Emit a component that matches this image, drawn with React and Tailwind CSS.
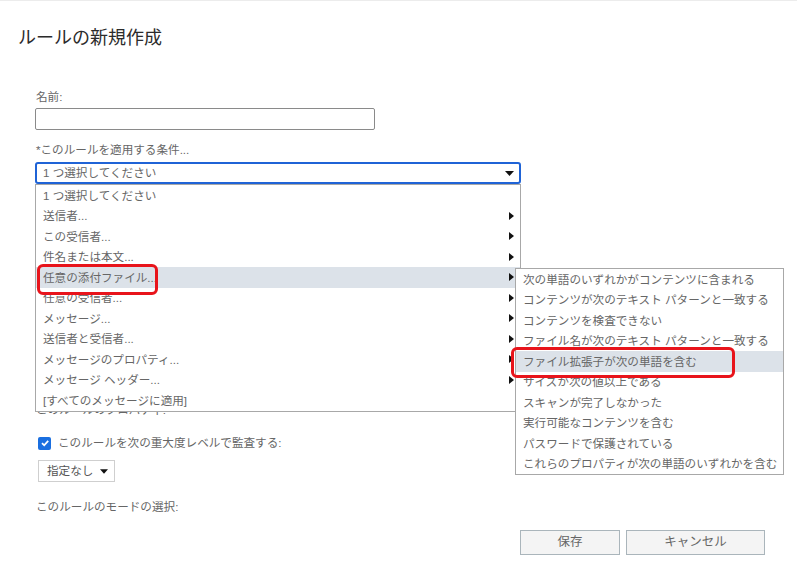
import React from "react";

const mainItems = [
  { t: "1 つ選択してください", a: false },
  { t: "送信者...", a: true },
  { t: "この受信者...", a: true },
  { t: "件名または本文...", a: true },
  { t: "任意の添付ファイル...", a: true, hl: true },
  { t: "任意の受信者...", a: true },
  { t: "メッセージ...", a: true },
  { t: "送信者と受信者...", a: true },
  { t: "メッセージのプロパティ...", a: true },
  { t: "メッセージ ヘッダー...", a: true },
  { t: "[すべてのメッセージに適用]", a: false },
];

const subItems = [
  "次の単語のいずれかがコンテンツに含まれる",
  "コンテンツが次のテキスト パターンと一致する",
  "コンテンツを検査できない",
  "ファイル名が次のテキスト パターンと一致する",
  "ファイル拡張子が次の単語を含む",
  "サイズが次の値以上である",
  "スキャンが完了しなかった",
  "実行可能なコンテンツを含む",
  "パスワードで保護されている",
  "これらのプロパティが次の単語のいずれかを含む",
];

function RightTri() {
  return (
    <svg width="5" height="8" viewBox="0 0 5 8" className="shrink-0">
      <polygon points="0,0 5,4 0,8" fill="#111" />
    </svg>
  );
}

function DownTri({ w = 9, h = 5 }) {
  return (
    <svg width={w} height={h} viewBox="0 0 9 5" className="shrink-0">
      <polygon points="0,0 9,0 4.5,5" fill="#111" />
    </svg>
  );
}

export default function App() {
  return (
    <div className="relative w-[797px] h-[569px] bg-white border-t border-[#ececec] overflow-hidden font-['Liberation_Sans','Noto_Sans_CJK_JP',sans-serif] text-[#666]">
      <h1 className="pt-[24px] pl-[18px] text-[18px] leading-[26px] text-[#2b2b2b]">
        ルールの新規作成
      </h1>

      <div className="pl-[35px] mt-[38px]">
        <div className="pl-[1px] text-[11.6px] leading-[16px]">名前:</div>
        <div className="mt-[3px] w-[340px] h-[22px] border border-[#8a8a8a] rounded-[2px] bg-white" />

        <div className="mt-[12px] pl-[1px] text-[11.6px] leading-[16px]">
          *このルールを適用する条件...
        </div>

        <div className="relative mt-[4px] w-[486px] z-10">
          <div className="h-[22px] border-2 border-[#1f63d6] rounded-[3px] bg-white flex items-center pl-[6px] pr-[5px]">
            <span className="flex-1 text-[11.6px] leading-[16px]">1 つ選択してください</span>
            <DownTri />
          </div>
          <div className="absolute left-0 top-[22px] w-[486px] bg-white border border-[#a8a8a8]">
            {mainItems.map((it, i) => (
              <div
                key={i}
                className={`h-[20.5px] flex items-center pl-[7px] pr-[6px] text-[11.6px] ${
                  it.hl ? "bg-[#dce2e9]" : ""
                }`}
              >
                <span className="flex-1 whitespace-nowrap">{it.t}</span>
                {it.a && <RightTri />}
              </div>
            ))}
          </div>
        </div>

        <div className="mt-[218px] pl-[1px] text-[11.6px] leading-[16px]">
          このルールのプロパティ:
        </div>

        <div className="mt-[17px] ml-[3px] flex items-center gap-[7px]">
          <div className="w-[13px] h-[13px] rounded-[2px] bg-[#1a6fe0] flex items-center justify-center">
            <svg width="10" height="10" viewBox="0 0 10 10">
              <path d="M2 5.2 L4.2 7.3 L8.2 2.8" fill="none" stroke="#fff" strokeWidth="1.8" />
            </svg>
          </div>
          <span className="text-[11.6px] leading-[16px]">このルールを次の重大度レベルで監査する:</span>
        </div>

        <div className="mt-[9px] ml-[3px] w-[77px] h-[22px] border border-[#cfcfcf] flex items-center pl-[8px] pr-[6px] gap-[6px]">
          <span className="flex-1 whitespace-nowrap text-[11.6px] text-[#555]">指定なし</span>
          <DownTri w={8} h={5} />
        </div>

        <div className="mt-[17px] pl-[1px] text-[11.6px] leading-[16px]">
          このルールのモードの選択:
        </div>

        <div className="mt-[15px] w-[730px] flex justify-end gap-[6px]">
          <button className="w-[100px] h-[25px] bg-[#f4f4f4] border border-[#aab5bb] text-[12.5px] text-[#666]">
            保存
          </button>
          <button className="w-[139px] h-[25px] bg-[#f4f4f4] border border-[#aab5bb] text-[12.5px] text-[#666]">
            キャンセル
          </button>
        </div>
      </div>

      <div className="absolute left-[515px] top-[267px] w-[269px] bg-white border border-[#a8a8a8] z-20">
        {subItems.map((t, i) => (
          <div
            key={i}
            className={`h-[20.5px] flex items-center pl-[7px] text-[11.6px] whitespace-nowrap ${
              i === 4 ? "bg-[#dce2e9]" : ""
            }`}
          >
            {t}
          </div>
        ))}
      </div>

      <div className="absolute left-[37px] top-[263px] w-[121px] h-[31px] border-[3px] border-[#e8141b] rounded-[6px] z-30" />
      <div className="absolute left-[511px] top-[346px] w-[224px] h-[31px] border-[3px] border-[#e8141b] rounded-[6px] z-30" />
    </div>
  );
}
